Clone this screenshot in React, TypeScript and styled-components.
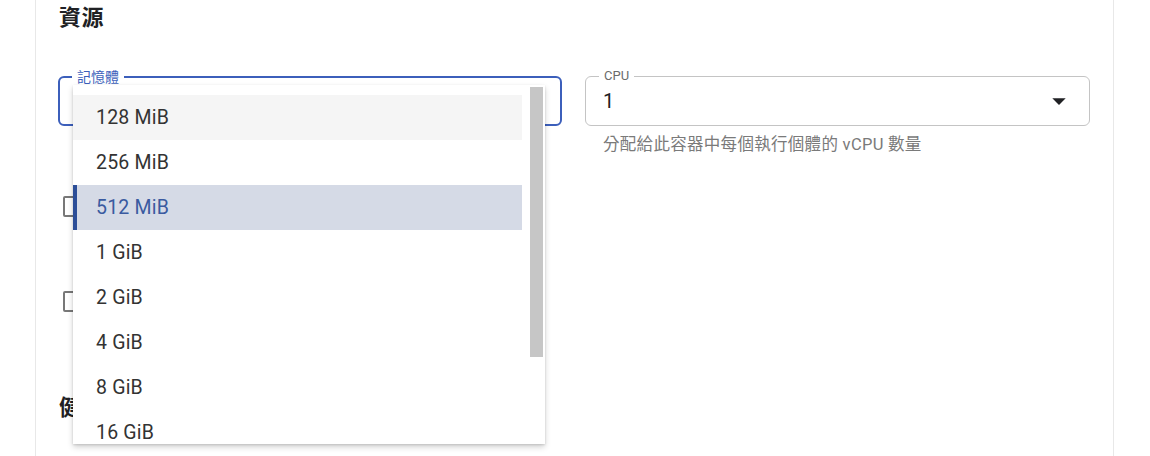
import React from 'react';
import styled, { createGlobalStyle } from 'styled-components';

const GlobalStyle = createGlobalStyle`
  html, body {
    margin: 0;
    padding: 0;
    background: #ffffff;
  }
  body {
    font-family: Roboto, 'Noto Sans CJK TC', 'Noto Sans', sans-serif;
    color: #202124;
    overflow: hidden;
  }
  * {
    box-sizing: border-box;
  }
`;

const Card = styled.section`
  margin-left: 35px;
  width: 1079px;
  height: 456px;
  padding: 3px 23px 0 22px;
  border-left: 1px solid #e8e8e8;
  border-right: 1px solid #e8e8e8;
  overflow: hidden;
`;

const SectionTitle = styled.h2<{ gap?: number }>`
  margin: ${props => props.gap ?? 0}px 0 0 1px;
  font-size: 22px;
  line-height: 30px;
  font-weight: 700;
  color: #202124;
  letter-spacing: 0.5px;
`;

const FieldsRow = styled.div`
  display: grid;
  grid-template-columns: 504px 505px;
  column-gap: 23px;
  margin-top: 43px;
  align-items: start;
`;

const Column = styled.div`
  position: relative;
  display: flex;
  flex-direction: column;
`;

const Outlined = styled.div<{ focused?: boolean }>`
  position: relative;
  height: 50px;
  display: flex;
  align-items: center;
  padding: 0 14px 0 17px;
  border: ${props => props.focused ? '2px solid #3c5fbb' : '1px solid #c4c4c4'};
  border-radius: 6px;
  background: #ffffff;
`;

const FloatLabel = styled.span<{ focused?: boolean }>`
  position: absolute;
  top: -9px;
  left: ${props => props.focused ? '12px' : '13px'};
  padding: 0 5px;
  background: #ffffff;
  font-size: ${props => props.focused ? '14px' : '13px'};
  line-height: 16px;
  color: ${props => props.focused ? '#3c5fbb' : '#6b6b6b'};
`;

const Value = styled.span`
  flex: 1;
  font-size: 20px;
  color: #202124;
`;

const Helper = styled.div`
  margin: 8px 0 0 18px;
  font-size: 16.5px;
  line-height: 22px;
  color: #7a7a7a;
  letter-spacing: 0.3px;
`;

const CheckRow = styled.div<{ gap: number }>`
  display: flex;
  align-items: flex-start;
  height: 50px;
  margin: ${props => props.gap}px 0 0 5px;
`;

const CheckBox = styled.span`
  flex: none;
  width: 20px;
  height: 21px;
  border: 2px solid #787878;
  border-radius: 2px;
`;

const Menu = styled.div`
  position: absolute;
  top: 9px;
  left: 15px;
  width: 472px;
  height: 359px;
  display: flex;
  background: #ffffff;
  box-shadow: 0 3px 6px rgba(0, 0, 0, 0.18), 0 1px 2px rgba(0, 0, 0, 0.12);
  z-index: 10;
`;

const MenuList = styled.ul`
  flex: 1;
  margin: 0;
  padding: 10px 7px 0 0;
  list-style: none;
  overflow: hidden;
`;

const ScrollTrack = styled.div`
  flex: none;
  width: 16px;
  padding: 2px 2px 0 1px;
`;

const ScrollThumb = styled.div`
  height: 270px;
  background: #c6c6c6;
`;

const MenuItem = styled.li<{ selected?: boolean; hovered?: boolean }>`
  height: 45px;
  display: flex;
  align-items: center;
  padding-left: 23px;
  font-size: 19.5px;
  letter-spacing: 0.2px;
  color: ${props => props.selected ? '#3a5aa0' : '#333333'};
  background: ${props => props.selected ? '#d5dae6' : props.hovered ? '#f5f5f5' : 'transparent'};
  box-shadow: ${props => props.selected ? 'inset 4px 0 0 #2c4e98' : 'none'};
`;

const memoryOptions = [
  '128 MiB', '256 MiB', '512 MiB', '1 GiB', '2 GiB',
  '4 GiB', '8 GiB', '16 GiB',
];

function ArrowDrop() {
  return (
    <svg width="32" height="32" viewBox="0 0 24 24" fill="#202124">
      <path d="M7 10l5 5 5-5z" />
    </svg>
  );
}

export default function App() {
  return (
    <>
      <GlobalStyle />
      <Card>
        <SectionTitle>資源</SectionTitle>
        <FieldsRow>
          <Column>
            <Outlined focused>
              <FloatLabel focused>記憶體</FloatLabel>
            </Outlined>
            <CheckRow gap={70}>
              <CheckBox />
            </CheckRow>
            <CheckRow gap={45}>
              <CheckBox />
            </CheckRow>
            <Menu>
              <MenuList>
                {memoryOptions.map((opt, i) => (
                  <MenuItem key={opt} hovered={i === 0} selected={opt === '512 MiB'}>
                    {opt}
                  </MenuItem>
                ))}
              </MenuList>
              <ScrollTrack>
                <ScrollThumb />
              </ScrollTrack>
            </Menu>
          </Column>
          <Column>
            <Outlined>
              <FloatLabel>CPU</FloatLabel>
              <Value>1</Value>
              <ArrowDrop />
            </Outlined>
            <Helper>分配給此容器中每個執行個體的 vCPU 數量</Helper>
          </Column>
        </FieldsRow>
        <SectionTitle gap={52}>健康狀態檢查</SectionTitle>
      </Card>
    </>
  );
}
